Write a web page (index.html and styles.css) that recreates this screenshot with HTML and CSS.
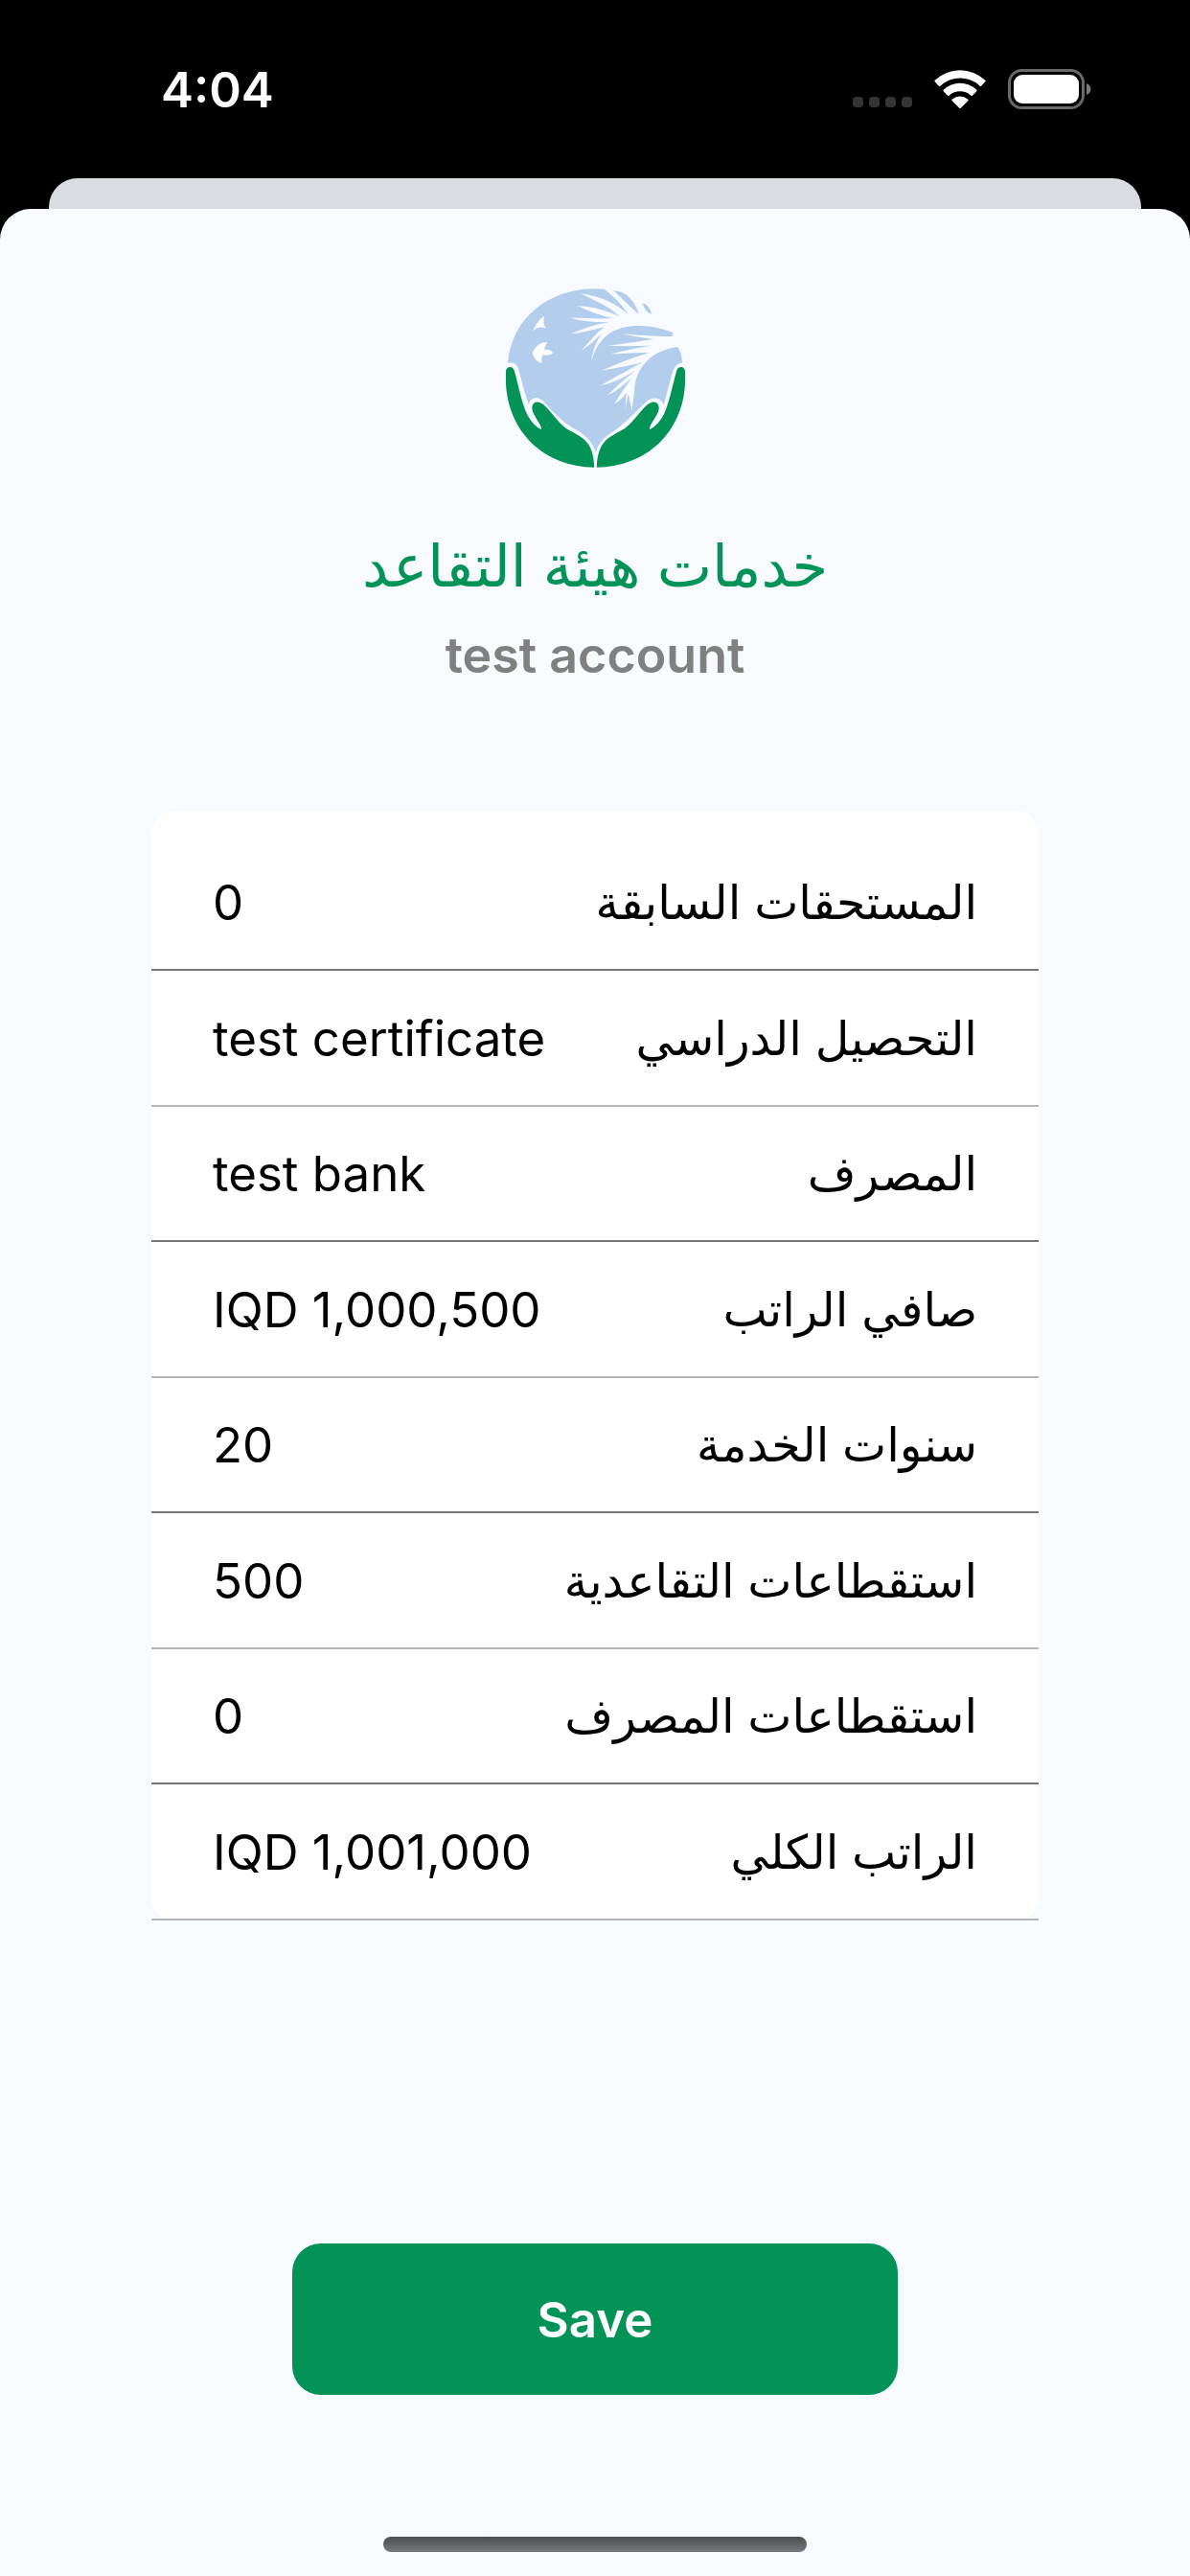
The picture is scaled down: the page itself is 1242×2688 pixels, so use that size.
FILE: index.html
```html
<!DOCTYPE html>
<html lang="ar">
<head>
    <meta charset="utf-8">
    <meta name="viewport" content="width=device-width, initial-scale=1">
    <title>خدمات هيئة التقاعد</title>
    <link rel="stylesheet" href="styles.css">
</head>
<body>
    <header class="status-bar">
        <span class="time">4:04</span>
        <div class="status-icons">
            <svg class="dots" viewBox="0 0 62 13" width="62" height="13">
                <rect x="0" width="11" height="11" rx="4"/>
                <rect x="17" width="11" height="11" rx="4"/>
                <rect x="34" width="11" height="11" rx="4"/>
                <rect x="51" width="11" height="11" rx="4"/>
            </svg>
            <svg class="wifi" viewBox="0 0 54 40" width="54" height="40">
                <path d="M1 10.5a1.3 1.3 0 0 0 0 2l3.600 3.900a1.300 1.300 0 0 0 2 0a30 30 0 0 1 40.800 0a1.300 1.300 0 0 0 2 0l3.600-3.900a1.300 1.300 0 0 0 0-2a38 38 0 0 0-52 0z"/>
                <path d="M10 20.500a1.300 1.300 0 0 0 0 2l3.800 4a1.300 1.300 0 0 0 2 0a17 17 0 0 1 22.400 0a1.300 1.300 0 0 0 2 0l3.800-4a1.300 1.300 0 0 0 0-2a25 25 0 0 0-34 0z"/>
                <path d="M19 30.500a1.300 1.300 0 0 0 0 2l7 7a1.300 1.300 0 0 0 2 0l7-7a1.300 1.300 0 0 0 0-2a12 12 0 0 0-16 0z"/>
            </svg>
            <svg class="battery" viewBox="0 0 88 42" width="88" height="42">
                <rect class="battery-case" x="1.500" y="1.500" width="77" height="39" rx="13"/>
                <rect x="6" y="6" width="68" height="30" rx="9"/>
                <path class="battery-tip" d="M82 15c6 2 6 10 0 12z"/>
            </svg>
        </div>
    </header>

    <div class="back-card"></div>

    <main class="sheet">
        <svg class="logo" viewBox="54 48 562 562" role="img" aria-label="هيئة التقاعد">
            <path class="sky" d="M60 282C72 140 190 48 335 49L362 50C385 66 420 98 438 130C400 95 350 72 288 64C330 85 380 105 410 136C370 117 330 105 278 102C315 120 350 132 390 142C345 143 300 142 254 140C290 152 330 154 376 154C335 160 295 174 257 191C295 186 325 178 362 169C335 190 315 215 291 242C315 228 330 212 354 191C335 220 325 245 323 276C340 205 390 166 465 165C510 164 550 174 578 187L576 198C530 199 470 194 418 190C450 198 485 203 517 207C470 214 420 222 374 227C420 231 470 228 514 227C470 234 425 243 382 254C420 253 465 248 501 250C455 263 405 283 355 305C400 298 440 289 484 280C440 300 400 325 350 353C390 344 420 330 461 305C430 330 400 355 372 383C400 370 425 350 448 328C430 355 412 380 394 410C412 400 422 390 432 373L428 430L438 376L449 431L457 371C458 300 510 240 593 231C602 244 606 262 608 280C582 284 578 305 570 335L549 413C542 393 518 385 498 400C455 440 420 480 385 500C352 520 340 545 336 562C330 540 314 515 280 494C240 475 205 440 175 405C155 383 130 390 126 412C112 380 100 320 91 294C85 281 68 278 60 282Z"/>
            <path class="sky" d="M392 55C435 58 455 85 472 128C450 115 425 85 392 55ZM481 94C498 97 508 112 511 128C500 128 490 115 481 94Z"/>
            <path class="bird" d="M174 135C170 152 173 164 181 174C163 166 152 171 138 181C148 162 157 144 174 135ZM137 250C147 230 163 214 184 218C177 227 174 235 176 241C186 239 196 240 202 250C193 258 180 258 170 256C165 264 166 272 167 282C151 278 141 266 137 250Z"/>
            <path id="hand" class="hand" d="M54 310C54 289 76 291 80 304C94 352 103 406 121 443C132 466 149 482 165 490C168 479 140 447 137 430C132 407 149 399 164 407C188 420 214 467 245 488C280 508 300 515 315 540C326 560 330 582 331 609C160 606 45 480 54 310Z"/>
            <use href="#hand" transform="matrix(-1 0 0 1 670 0)"/>
        </svg>

        <h1 class="title">خدمات هيئة التقاعد</h1>
        <p class="account">test account</p>

        <table class="details" dir="rtl">
            <tbody>
                <tr><th scope="row">المستحقات السابقة</th><td dir="ltr">0</td></tr>
                <tr><th scope="row">التحصيل الدراسي</th><td dir="ltr">test certificate</td></tr>
                <tr><th scope="row">المصرف</th><td dir="ltr">test bank</td></tr>
                <tr><th scope="row">صافي الراتب</th><td dir="ltr">IQD 1,000,500</td></tr>
                <tr><th scope="row">سنوات الخدمة</th><td dir="ltr">20</td></tr>
                <tr><th scope="row">استقطاعات التقاعدية</th><td dir="ltr">500</td></tr>
                <tr><th scope="row">استقطاعات المصرف</th><td dir="ltr">0</td></tr>
                <tr><th scope="row">الراتب الكلي</th><td dir="ltr">IQD 1,001,000</td></tr>
            </tbody>
        </table>

        <button class="save" type="button">Save</button>
        <div class="home-indicator"></div>
    </main>
</body>
</html>
```

FILE: styles.css
```css
* {
    box-sizing: border-box;
}

body {
    margin: 0;
    min-height: 100vh;
    display: flex;
    flex-direction: column;
    background: #000;
    font-family: Inter, "DejaVu Sans", sans-serif;
    font-size: 51px;
    color: #000;
}

.status-bar {
    height: 186px;
    padding: 0 102px 0 168px;
    display: flex;
    justify-content: space-between;
    align-items: center;
    color: #fff;
}

.time {
    font-weight: 600;
}

.status-icons {
    display: flex;
    align-items: center;
    gap: 23px;
}

.status-icons svg {
    fill: #fff;
}

.status-icons .dots {
    fill: #353535;
    align-self: flex-end;
}

.battery .battery-case {
    fill: none;
    stroke: #6b6969;
    stroke-width: 3;
}

.battery .battery-tip {
    fill: #7b7979;
}

.back-card {
    height: 32px;
    margin: 0 51px;
    background: #d9dce1;
    border-radius: 30px 30px 0 0;
}

.sheet {
    flex: 1;
    padding: 83px 0 25px;
    display: flex;
    flex-direction: column;
    align-items: center;
    background: #f7faff;
    border-radius: 32px 32px 0 0;
}

.logo {
    width: 187px;
    height: 187px;
}

.logo .sky {
    fill: #b2ceec;
}

.logo .bird {
    fill: #fff;
}

.logo .hand {
    fill: #049357;
}

.title {
    margin: 62px 0 0;
    font-size: 61px;
    font-weight: 400;
    line-height: 80px;
    color: #049357;
}

.account {
    margin: 22px 0 0;
    font-size: 52px;
    font-weight: 600;
    line-height: 64px;
    color: #808080;
}

.details {
    width: calc(100% - 316px);
    margin-top: 130px;
    border-collapse: separate;
    border-spacing: 0;
    background: #fff;
    border-radius: 24px;
}

.details th,
.details td {
    height: 141px;
    padding: 0 64px;
    border-bottom: 2px solid #777;
    font-weight: 400;
    white-space: nowrap;
}

.details th {
    padding-left: 0;
    font-size: 49px;
    text-align: right;
}

.details td {
    padding-right: 0;
    text-align: left;
}

.details tr:nth-child(even) > * {
    height: 142px;
    border-bottom-color: #b5b5b5;
}

.details tr:first-child > * {
    height: 167px;
    padding-top: 25px;
}

.save {
    width: 632px;
    height: 158px;
    margin-top: auto;
    border: none;
    border-radius: 30px;
    background: #049357;
    color: #fff;
    font: inherit;
    font-weight: 600;
}

.home-indicator {
    width: 442px;
    height: 16px;
    margin-top: 148px;
    border-radius: 8px;
    background: linear-gradient(#4b4d4f, #77797b);
}
```
